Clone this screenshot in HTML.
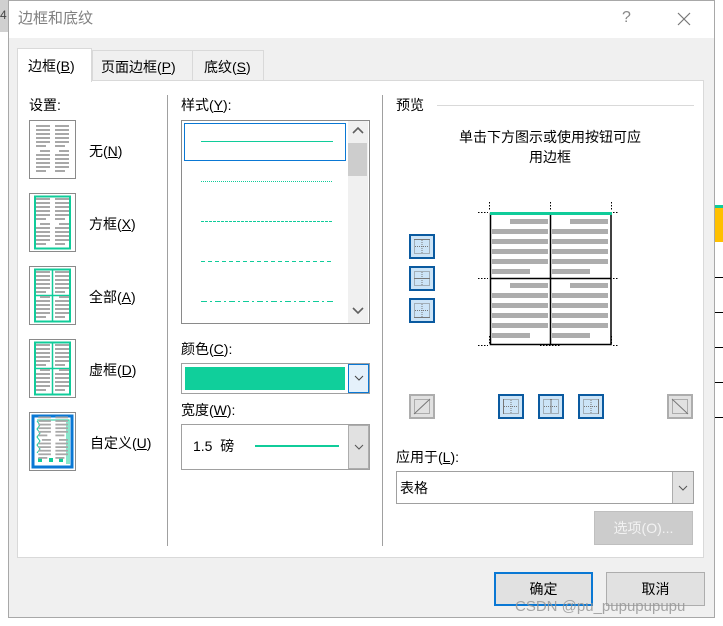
<!DOCTYPE html>
<html><head><meta charset="utf-8"><style>
*{margin:0;padding:0;box-sizing:border-box}
body{width:723px;height:626px;background:#fff;position:relative;overflow:hidden;font-family:"Liberation Sans","Noto Sans CJK SC",sans-serif;font-size:14px;color:#000}
.a{position:absolute}
.t{position:absolute;white-space:nowrap;line-height:18px}
u{text-decoration:underline}
.box{position:absolute;border:1px solid #a0a0a0;background:#fff}
.ib{position:absolute;width:26px;height:25px;border:2px solid #0a5aa0;background:#cce4f7}
.ig{position:absolute;width:26px;height:25px;border:2px solid #adadad;background:#e1e1e1}
</style></head><body>
<svg width="0" height="0" style="position:absolute">
<defs>
<g id="bars" fill="#a8a8a8">
<rect x="7" y="5" width="14" height="2"/><rect x="26" y="5" width="14" height="2"/>
<rect x="7" y="9" width="14" height="2"/><rect x="26" y="9" width="14" height="2"/>
<rect x="7" y="13" width="14" height="2"/><rect x="26" y="13" width="14" height="2"/>
<rect x="7" y="17" width="14" height="2"/><rect x="26" y="17" width="14" height="2"/>
<rect x="7" y="21" width="14" height="2"/><rect x="26" y="21" width="14" height="2"/>
<rect x="7" y="25" width="10" height="2"/><rect x="26" y="25" width="10" height="2"/>
<rect x="11" y="30" width="10" height="2"/><rect x="30" y="30" width="10" height="2"/>
<rect x="7" y="34" width="14" height="2"/><rect x="26" y="34" width="14" height="2"/>
<rect x="7" y="38" width="14" height="2"/><rect x="26" y="38" width="14" height="2"/>
<rect x="7" y="42" width="14" height="2"/><rect x="26" y="42" width="14" height="2"/>
<rect x="7" y="46" width="14" height="2"/><rect x="26" y="46" width="14" height="2"/>
<rect x="7" y="50" width="10" height="2"/><rect x="26" y="50" width="10" height="2"/>
</g>
<g id="cell" fill="#adadad">
<rect x="19" y="3" width="38" height="5"/><rect x="1" y="13" width="56" height="5"/><rect x="1" y="23" width="56" height="5"/><rect x="1" y="33" width="56" height="5"/><rect x="1" y="43" width="56" height="5"/><rect x="1" y="53" width="38" height="5"/>
</g>
</defs></svg>

<!-- left strip outside dialog -->
<div class="a" style="left:0;top:0;width:8px;height:32px;background:#d0d0d0"></div>
<div class="t" style="left:0;top:6px;font-size:12px;color:#444">4</div>
<!-- right strip outside -->
<div class="a" style="left:715px;top:205px;width:8px;height:3px;background:#10cc9a"></div>
<div class="a" style="left:715px;top:208px;width:8px;height:34px;background:#ffc000"></div>
<div class="a" style="left:715px;top:277px;width:8px;height:1px;background:#000"></div>
<div class="a" style="left:715px;top:312px;width:8px;height:1px;background:#000"></div>
<div class="a" style="left:715px;top:347px;width:8px;height:1px;background:#000"></div>
<div class="a" style="left:715px;top:382px;width:8px;height:1px;background:#000"></div>
<div class="a" style="left:715px;top:417px;width:8px;height:1px;background:#000"></div>

<!-- dialog -->
<div class="a" style="left:8px;top:0;width:707px;height:618px;border:1px solid #a8a8a8;background:#f0f0f0"></div>
<div class="a" style="left:9px;top:1px;width:705px;height:37px;background:#fff"></div>
<div class="t" style="left:18px;top:10px;font-size:15px;color:#808080">边框和底纹</div>
<div class="t" style="left:622px;top:9px;font-size:16px;color:#888">?</div>
<svg class="a" style="left:677px;top:12px" width="14" height="14"><path d="M1 1L13 13M13 1L1 13" stroke="#777" stroke-width="1.2"/></svg>

<!-- tabs -->
<div class="a" style="left:92px;top:50px;width:101px;height:31px;border:1px solid #d9d9d9;background:#f0f0f0"></div>
<div class="a" style="left:192px;top:50px;width:72px;height:31px;border:1px solid #d9d9d9;background:#f0f0f0"></div>
<div class="a" style="left:17px;top:80px;width:687px;height:478px;border:1px solid #d9d9d9;background:#fff"></div>
<div class="a" style="left:17px;top:48px;width:75px;height:34px;border:1px solid #d9d9d9;border-bottom:none;background:#fff"></div>
<div class="t" style="left:28px;top:57px">边框(<u>B</u>)</div>
<div class="t" style="left:101px;top:58px">页面边框(<u>P</u>)</div>
<div class="t" style="left:204px;top:58px">底纹(<u>S</u>)</div>

<!-- settings -->
<div class="t" style="left:29px;top:96px">设置:</div>
<div class="a" style="left:167px;top:95px;width:1px;height:451px;background:#a0a0a0"></div>
<div class="a" style="left:382px;top:95px;width:1px;height:451px;background:#a0a0a0"></div>

<svg class="a" style="left:29px;top:120px" width="48" height="60"><rect x=".5" y=".5" width="46" height="58" fill="#fff" stroke="#8a8a8a"/><use href="#bars"/></svg>
<svg class="a" style="left:29px;top:193px" width="48" height="60"><rect x=".5" y=".5" width="46" height="58" fill="#fff" stroke="#8a8a8a"/><rect x="6" y="3.5" width="35" height="52" fill="none" stroke="#10cc9a" stroke-width="2"/><use href="#bars"/></svg>
<svg class="a" style="left:29px;top:266px" width="48" height="60"><rect x=".5" y=".5" width="46" height="58" fill="#fff" stroke="#8a8a8a"/><rect x="6" y="3.5" width="35" height="52" fill="none" stroke="#10cc9a" stroke-width="2"/><path d="M23.5 4V55M6 29.5H41" stroke="#10cc9a" stroke-width="1.5"/><use href="#bars"/></svg>
<svg class="a" style="left:29px;top:339px" width="48" height="60"><rect x=".5" y=".5" width="46" height="58" fill="#fff" stroke="#8a8a8a"/><rect x="6" y="3.5" width="35" height="52" fill="none" stroke="#10cc9a" stroke-width="2"/><path d="M23.5 4V55M6 29.5H41" stroke="#10cc9a" stroke-width="1.5"/><use href="#bars"/></svg>
<svg class="a" style="left:29px;top:412px" width="48" height="60"><rect x=".5" y=".5" width="46" height="58" fill="#fff" stroke="#8a8a8a"/><rect x="4" y="4" width="39" height="51" fill="none" stroke="#0a78d4" stroke-width="3"/><path d="M8 8H40V52M38 10V52" stroke="#10cc9a" stroke-width="1" fill="none"/><path d="M8 9l3 4-3 4 3 4-3 4 3 4-3 4 3 4-3 4" stroke="#10cc9a" fill="none"/><rect x="9" y="46" width="4" height="4" fill="#10cc9a"/><rect x="20" y="46" width="4" height="4" fill="#10cc9a"/><rect x="30" y="46" width="4" height="4" fill="#10cc9a"/><g transform="translate(3,0) scale(0.9)"><use href="#bars"/></g></svg>
<div class="t" style="left:89px;top:142px">无(<u>N</u>)</div>
<div class="t" style="left:89px;top:215px">方框(<u>X</u>)</div>
<div class="t" style="left:89px;top:288px">全部(<u>A</u>)</div>
<div class="t" style="left:89px;top:361px">虚框(<u>D</u>)</div>
<div class="t" style="left:90px;top:434px">自定义(<u>U</u>)</div>

<!-- style -->
<div class="t" style="left:181px;top:96px">样式(<u>Y</u>):</div>
<div class="box" style="left:181px;top:120px;width:189px;height:204px;border-color:#8a8a8a"></div>
<div class="a" style="left:184px;top:123px;width:162px;height:38px;border:1px solid #0a78d4"></div>
<div class="a" style="left:348px;top:121px;width:20px;height:202px;background:#f0f0f0"></div>
<div class="a" style="left:348px;top:143px;width:19px;height:33px;background:#cdcdcd"></div>
<svg class="a" style="left:352px;top:126px" width="12" height="10"><path d="M1 7L6 2L11 7" stroke="#606060" stroke-width="1.6" fill="none"/></svg>
<svg class="a" style="left:352px;top:306px" width="12" height="10"><path d="M1 2L6 7L11 2" stroke="#606060" stroke-width="1.6" fill="none"/></svg>
<svg class="a" style="left:200px;top:130px" width="134" height="180">
<line x1="1" y1="11.5" x2="133" y2="11.5" stroke="#10cc9a"/>
<line x1="1" y1="51.5" x2="133" y2="51.5" stroke="#10cc9a" stroke-dasharray="1 1"/>
<line x1="1" y1="91.5" x2="133" y2="91.5" stroke="#10cc9a" stroke-dasharray="3 1"/>
<line x1="1" y1="131.5" x2="133" y2="131.5" stroke="#10cc9a" stroke-dasharray="4 3"/>
<line x1="1" y1="171.5" x2="133" y2="171.5" stroke="#10cc9a" stroke-dasharray="6 3 2 3"/>
</svg>

<div class="t" style="left:181px;top:340px">颜色(<u>C</u>):</div>
<div class="box" style="left:181px;top:363px;width:189px;height:31px"></div>
<div class="a" style="left:185px;top:367px;width:160px;height:23px;background:#10cf9b"></div>
<div class="a" style="left:348px;top:364px;width:21px;height:29px;border:1px solid #0a78d4;background:#e5f1fb"></div>
<svg class="a" style="left:354px;top:375px" width="10" height="6"><path d="M1 1L5 5L9 1" stroke="#444" fill="none"/></svg>

<div class="t" style="left:181px;top:401px">宽度(<u>W</u>):</div>
<div class="box" style="left:181px;top:424px;width:189px;height:46px"></div>
<div class="t" style="left:193px;top:437px">1.5 &nbsp;磅</div>
<div class="a" style="left:255px;top:445px;width:84px;height:2px;background:#10cc9a"></div>
<div class="a" style="left:348px;top:425px;width:21px;height:44px;border:1px solid #adadad;background:#e1e1e1"></div>
<svg class="a" style="left:354px;top:444px" width="10" height="6"><path d="M1 1L5 5L9 1" stroke="#555" fill="none"/></svg>

<!-- preview -->
<div class="t" style="left:396px;top:96px">预览</div>
<div class="a" style="left:437px;top:105px;width:257px;height:1px;background:#d9d9d9"></div>
<div class="t" style="left:396px;top:127px;width:308px;text-align:center;line-height:20px">单击下方图示或使用按钮可应<br>用边框</div>

<svg class="a" style="left:478px;top:200px" width="140" height="160">
<g stroke="#000" stroke-dasharray="1.5 1.5" stroke-width="1">
<path d="M11.5 2V10M72.5 2V10M133.5 2V10M11.5 136V144M72.5 136V144M133.5 136V144M0 12.5H10M62 12.5H83M135 12.5H144M0 78.5H10M135 78.5H144M0 145.5H10M135 145.5H144M62 145.5H83"/>
</g>
<rect x="12.5" y="13.5" width="120.5" height="131" fill="none" stroke="#000" stroke-width="1.5"/>
<path d="M72.5 13V145M12 78.5H133" stroke="#000" stroke-width="1.5"/>
<rect x="12" y="12" width="122" height="3" fill="#10cc9a"/>
<g transform="translate(13,16)"><use href="#cell"/></g>
<g transform="translate(73,16)"><use href="#cell"/></g>
<g transform="translate(13,80)"><use href="#cell"/></g>
<g transform="translate(73,80)"><use href="#cell"/></g>
</svg>

<div class="ib" style="left:409px;top:234px"></div>
<div class="ib" style="left:409px;top:266px"></div>
<div class="ib" style="left:409px;top:298px"></div>
<svg class="a" style="left:411px;top:236px" width="22" height="21"><g stroke="#777" stroke-dasharray="1 1" fill="none"><rect x="3.5" y="3.5" width="15" height="14"/><path d="M11 4V17M4 10.5H18"/></g><path d="M3 3.5H19" stroke="#777"/></svg>
<svg class="a" style="left:411px;top:268px" width="22" height="21"><g stroke="#777" stroke-dasharray="1 1" fill="none"><rect x="3.5" y="3.5" width="15" height="14"/><path d="M11 4V17"/></g><path d="M3 10.5H19" stroke="#777"/></svg>
<svg class="a" style="left:411px;top:300px" width="22" height="21"><g stroke="#777" stroke-dasharray="1 1" fill="none"><rect x="3.5" y="3.5" width="15" height="14"/><path d="M11 4V17M4 10.5H18"/></g><path d="M3 17.5H19" stroke="#777"/></svg>

<div class="ig" style="left:409px;top:394px"></div>
<div class="ib" style="left:498px;top:394px"></div>
<div class="ib" style="left:538px;top:394px"></div>
<div class="ib" style="left:578px;top:394px"></div>
<div class="ig" style="left:667px;top:394px"></div>
<svg class="a" style="left:411px;top:396px" width="22" height="21"><rect x="3.5" y="3.5" width="15" height="14" fill="none" stroke="#777" stroke-dasharray="1 1"/><path d="M3 18L19 3" stroke="#777"/></svg>
<svg class="a" style="left:500px;top:396px" width="22" height="21"><g stroke="#777" stroke-dasharray="1 1" fill="none"><rect x="3.5" y="3.5" width="15" height="14"/><path d="M11 4V17M4 10.5H18"/></g><path d="M3.5 3V18" stroke="#777"/></svg>
<svg class="a" style="left:540px;top:396px" width="22" height="21"><g stroke="#777" stroke-dasharray="1 1" fill="none"><rect x="3.5" y="3.5" width="15" height="14"/><path d="M4 10.5H18"/></g><path d="M11 3V18" stroke="#777"/></svg>
<svg class="a" style="left:580px;top:396px" width="22" height="21"><g stroke="#777" stroke-dasharray="1 1" fill="none"><rect x="3.5" y="3.5" width="15" height="14"/><path d="M11 4V17M4 10.5H18"/></g><path d="M18.5 3V18" stroke="#777"/></svg>
<svg class="a" style="left:669px;top:396px" width="22" height="21"><rect x="3.5" y="3.5" width="15" height="14" fill="none" stroke="#777" stroke-dasharray="1 1"/><path d="M3 3L19 18" stroke="#777"/></svg>

<div class="t" style="left:396px;top:448px">应用于(<u>L</u>):</div>
<div class="box" style="left:396px;top:471px;width:298px;height:33px"></div>
<div class="t" style="left:400px;top:479px">表格</div>
<div class="a" style="left:672px;top:472px;width:21px;height:31px;background:#e1e1e1;border-left:1px solid #adadad"></div>
<svg class="a" style="left:678px;top:485px" width="10" height="6"><path d="M1 1L5 5L9 1" stroke="#555" fill="none"/></svg>
<div class="a" style="left:594px;top:511px;width:99px;height:34px;background:#cccccc;border:1px solid #bfbfbf"></div>
<div class="t" style="left:594px;top:519px;width:99px;text-align:center;color:#f2f2f2">选项(O)...</div>

<!-- bottom buttons -->
<div class="a" style="left:494px;top:572px;width:99px;height:34px;background:#e1e1e1;border:2px solid #0a78d4"></div>
<div class="t" style="left:494px;top:580px;width:99px;text-align:center">确定</div>
<div class="a" style="left:606px;top:572px;width:99px;height:34px;background:#e1e1e1;border:1px solid #adadad"></div>
<div class="t" style="left:606px;top:580px;width:99px;text-align:center">取消</div>
<div class="t" style="left:515px;top:598px;font-size:15px;color:rgba(150,150,150,0.85)">CSDN @pu_pupupupupu</div>
</body></html>
